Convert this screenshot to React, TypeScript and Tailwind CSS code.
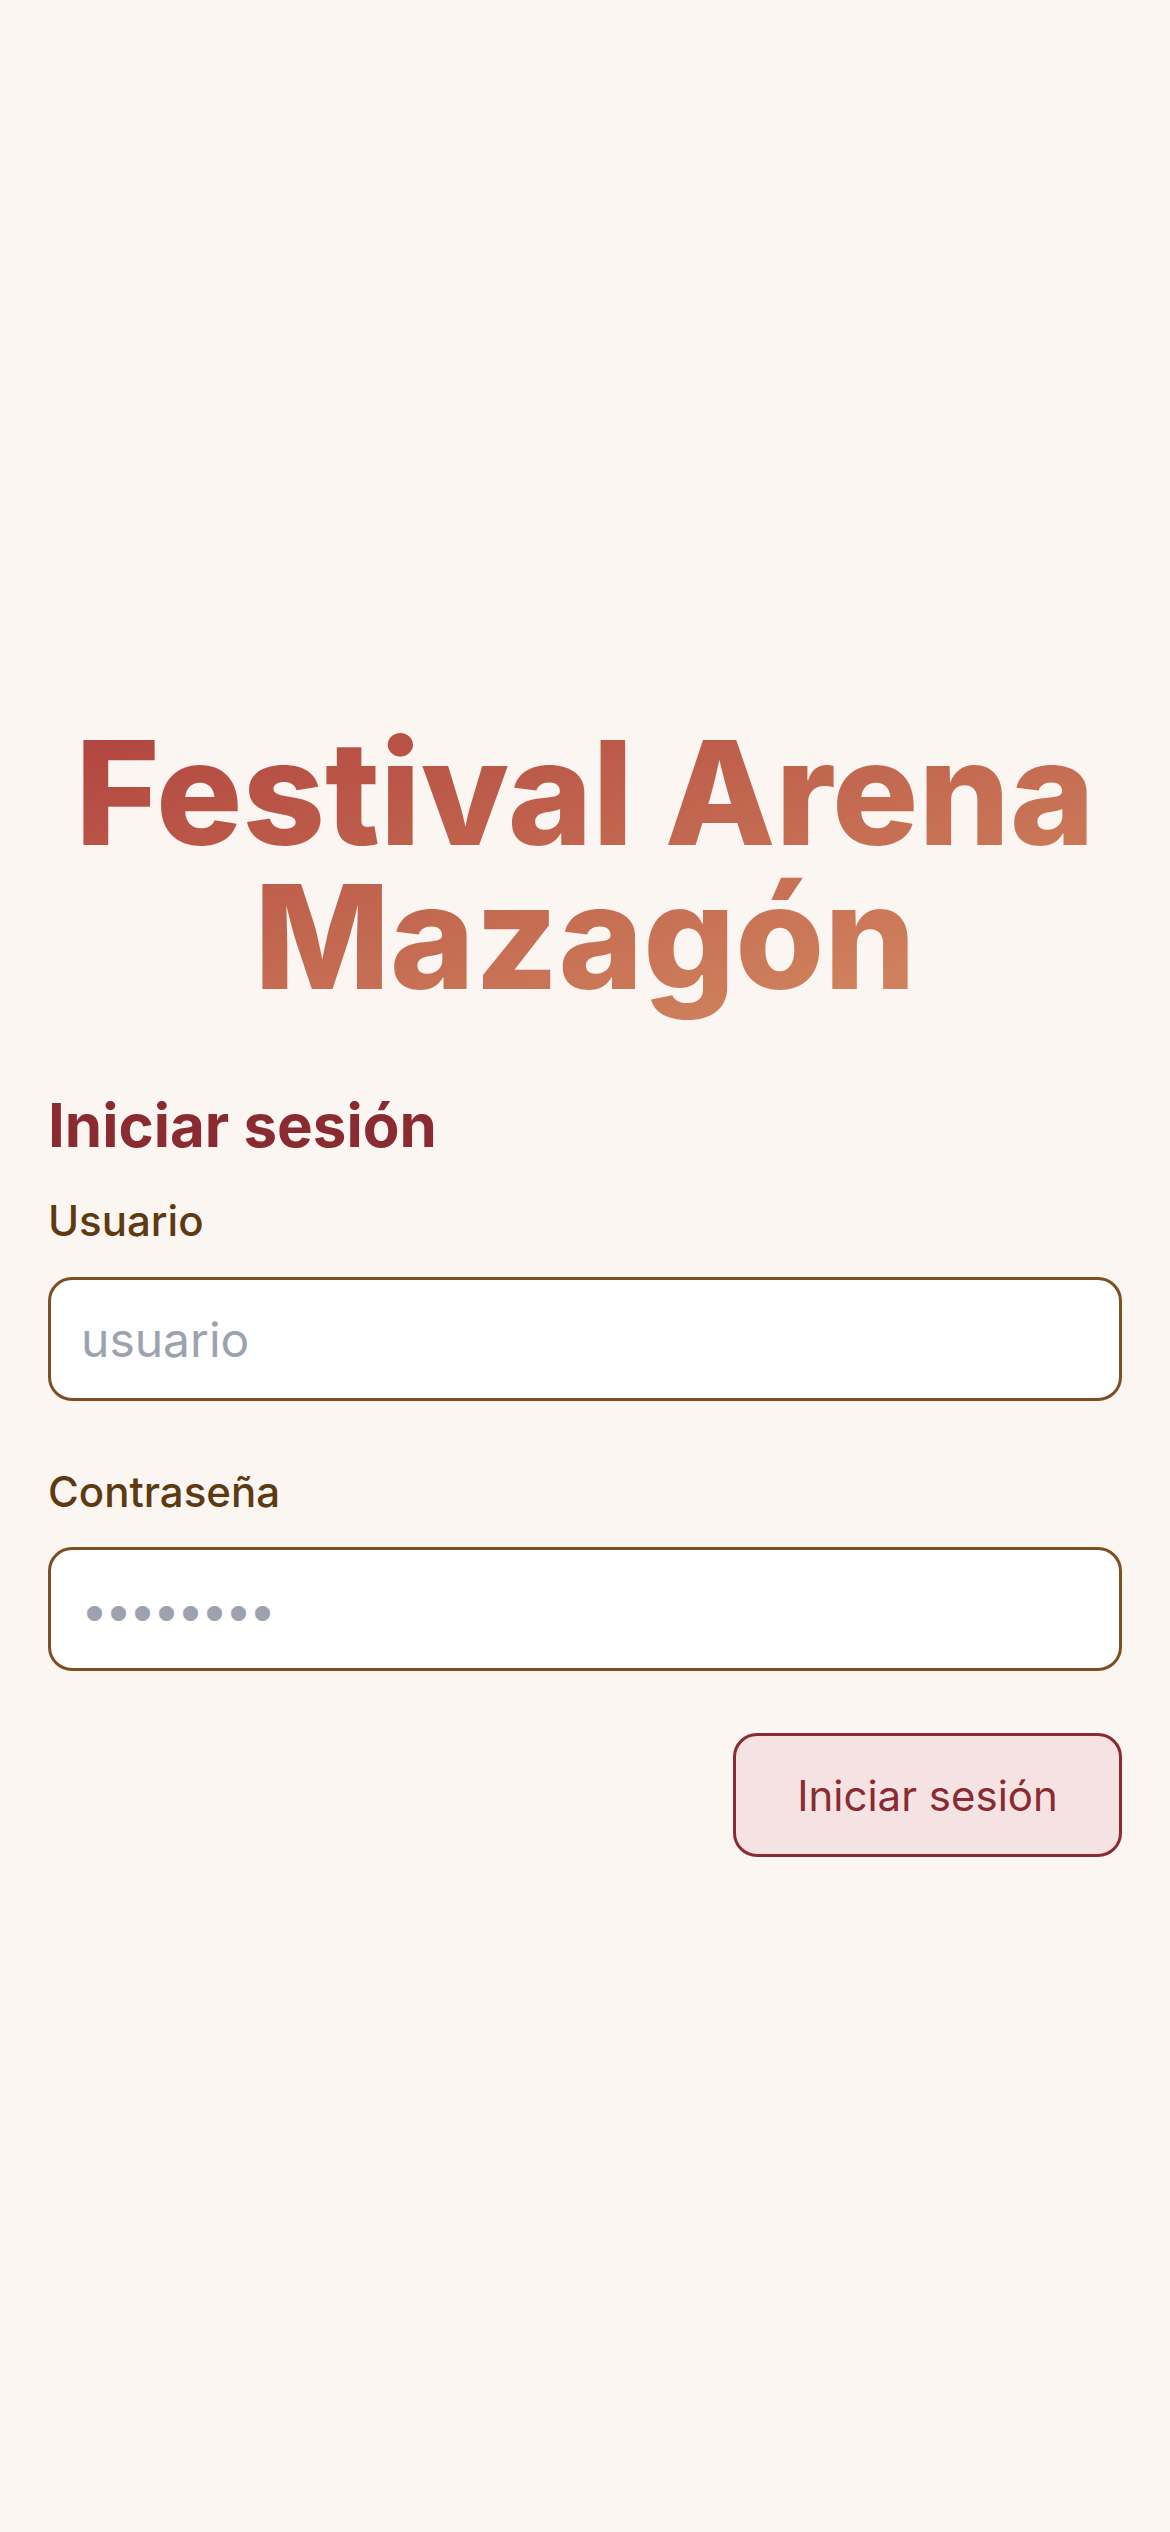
import React from "react";

export default function App() {
  return (
    <div
      className="min-h-screen bg-[#fbf6f2] px-[48px] pt-[721px]"
      style={{ fontFamily: "Inter, 'Noto Sans', sans-serif" }}
    >
      <h1 className="pb-[34px] text-center text-[144px] leading-none font-extrabold bg-linear-to-br from-[#b0423f] to-[#d69064] bg-clip-text text-transparent">
        Festival Arena Mazagón
      </h1>
      <form className="mt-[40px] flex flex-col" onSubmit={(e) => e.preventDefault()}>
        <h2 className="text-[60px] leading-[84px] font-bold text-[#8a2b31]">Iniciar sesión</h2>
        <label className="mt-[24px] text-[42px] leading-[60px] font-medium text-[#5e3a12]">Usuario</label>
        <input
          type="text"
          placeholder="usuario"
          className="mt-[26px] h-[124px] w-full rounded-[24px] border-[3px] border-[#7d4f22] bg-white px-[30px] text-[48px] text-[#374151] placeholder:text-[#9ca3af] outline-none"
        />
        <label className="mt-[61px] text-[42px] leading-[60px] font-medium text-[#5e3a12]">Contraseña</label>
        <input
          type="password"
          placeholder="••••••••"
          className="mt-[25px] h-[124px] w-full rounded-[24px] border-[3px] border-[#7d4f22] bg-white px-[30px] text-[48px] tracking-[-3px] text-[#374151] placeholder:text-[#9ca3af] outline-none"
        />
        <div className="mt-[62px] flex justify-end">
          <button
            type="submit"
            className="h-[124px] w-[389px] rounded-[24px] border-[3px] border-[#8a2b31] bg-[#f5e3e3] text-[42px] text-[#8a2b31]"
          >
            Iniciar sesión
          </button>
        </div>
      </form>
    </div>
  );
}
